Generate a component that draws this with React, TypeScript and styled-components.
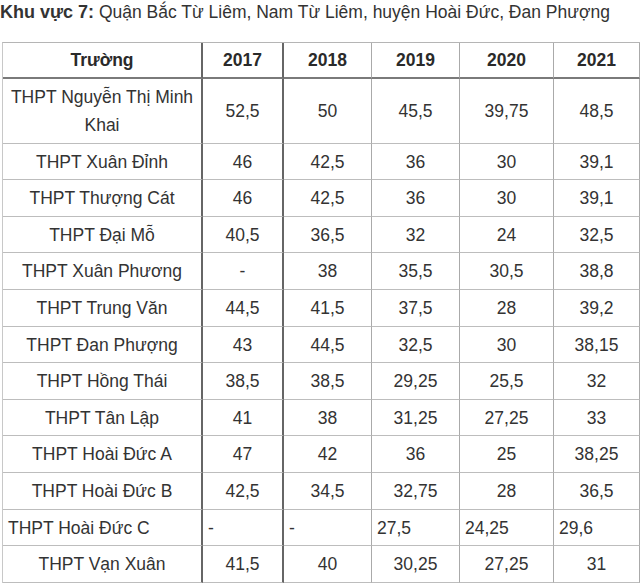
import React from "react";
import styled, { createGlobalStyle } from "styled-components";

const GlobalStyle = createGlobalStyle`
  body {
    margin: 0;
    background: #fff;
    font-family: "Liberation Sans", Arial, sans-serif;
    color: #333;
  }
`;

const Page = styled.div`
  width: 640px;
  height: 586px;
  overflow: hidden;
`;

const Title = styled.div`
  font-size: 17.5px;
  line-height: 24px;
  color: #333;
  margin-bottom: 18px;
  white-space: nowrap;
  b {
    font-weight: bold;
    font-size: 18px;
  }
`;

const StyledTable = styled.table`
  margin-left: 2px;
  width: 637px;
  table-layout: fixed;
  border-collapse: separate;
  border-spacing: 0;
  border-top: 1px solid #b5b5b5;
  border-left: 1px solid #c8c8c8;
  font-size: 17.5px;
`;

const HeadCell = styled.th<{ $dark?: boolean }>`
  font-weight: bold;
  text-align: center;
  line-height: 27px;
  padding: 4px 4px 3px;
  color: #2a2a2a;
  border-bottom: 2px solid #7a7a7a;
  border-right: ${({ $dark }) => ($dark ? "2px solid #666" : "1px solid #aaa")};
`;

const Cell = styled.td<{ $dark?: boolean; $left?: boolean }>`
  text-align: ${({ $left }) => ($left ? "left" : "center")};
  line-height: 28px;
  padding: 4px 4px 3.6px ${({ $left }) => ($left ? "5px" : "4px")};
  color: #333;
  border-bottom: 1px solid #bdbdbd;
  border-right: ${({ $dark }) => ($dark ? "2px solid #666" : "1px solid #aaa")};
`;

const years = ["2017", "2018", "2019", "2020", "2021"];
const widths = [200, 81, 88, 88, 94, 86];
const darkCols = [true, true, false, false, false, false];

type Row = { name: string; vals: string[]; left?: boolean };

const rows: Row[] = [
  { name: "THPT Nguyễn Thị Minh Khai", vals: ["52,5", "50", "45,5", "39,75", "48,5"] },
  { name: "THPT Xuân Đỉnh", vals: ["46", "42,5", "36", "30", "39,1"] },
  { name: "THPT Thượng Cát", vals: ["46", "42,5", "36", "30", "39,1"] },
  { name: "THPT Đại Mỗ", vals: ["40,5", "36,5", "32", "24", "32,5"] },
  { name: "THPT Xuân Phương", vals: ["-", "38", "35,5", "30,5", "38,8"] },
  { name: "THPT Trung Văn", vals: ["44,5", "41,5", "37,5", "28", "39,2"] },
  { name: "THPT Đan Phượng", vals: ["43", "44,5", "32,5", "30", "38,15"] },
  { name: "THPT Hồng Thái", vals: ["38,5", "38,5", "29,25", "25,5", "32"] },
  { name: "THPT Tân Lập", vals: ["41", "38", "31,25", "27,25", "33"] },
  { name: "THPT Hoài Đức A", vals: ["47", "42", "36", "25", "38,25"] },
  { name: "THPT Hoài Đức B", vals: ["42,5", "34,5", "32,75", "28", "36,5"] },
  { name: "THPT Hoài Đức C", vals: ["-", "-", "27,5", "24,25", "29,6"], left: true },
  { name: "THPT Vạn Xuân", vals: ["41,5", "40", "30,25", "27,25", "31"] },
];

export default function App() {
  return (
    <Page>
      <GlobalStyle />
      <Title>
        <b>Khu vực 7:</b> Quận Bắc Từ Liêm, Nam Từ Liêm, huyện Hoài Đức, Đan Phượng
      </Title>
      <StyledTable>
        <colgroup>
          {widths.map((w, i) => (
            <col key={i} style={{ width: w }} />
          ))}
        </colgroup>
        <thead>
          <tr>
            <HeadCell $dark>Trường</HeadCell>
            {years.map((y, i) => (
              <HeadCell key={y} $dark={darkCols[i + 1]}>
                {y}
              </HeadCell>
            ))}
          </tr>
        </thead>
        <tbody>
          {rows.map((r) => (
            <tr key={r.name}>
              <Cell $dark $left={r.left}>
                {r.name}
              </Cell>
              {r.vals.map((v, i) => (
                <Cell key={i} $dark={darkCols[i + 1]} $left={r.left}>
                  {v}
                </Cell>
              ))}
            </tr>
          ))}
        </tbody>
      </StyledTable>
    </Page>
  );
}
